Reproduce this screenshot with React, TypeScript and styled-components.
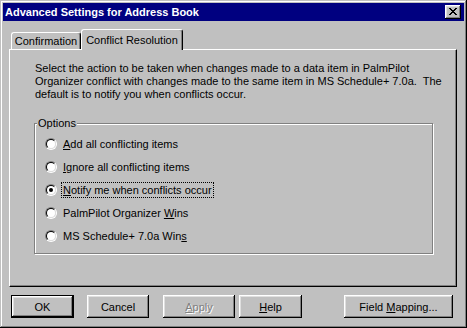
import React from 'react';
import styled, { createGlobalStyle, css } from 'styled-components';

const Colors = {
  face: '#c0c0c0',
  light: '#dfdfdf',
  white: '#ffffff',
  shadow: '#808080',
  dark: '#000000',
  navy: '#000080',
};

const GlobalStyle = createGlobalStyle`
  html, body {
    margin: 0;
    padding: 0;
    background: ${Colors.face};
  }
  * {
    box-sizing: border-box;
  }
`;

const Window = styled.div`
  width: 467px;
  height: 328px;
  padding: 3px;
  display: flex;
  flex-direction: column;
  background: ${Colors.face};
  font-family: 'Liberation Sans', Arial, sans-serif;
  font-size: 11px;
  color: ${Colors.dark};
  box-shadow: inset -1px -1px ${Colors.dark}, inset 1px 1px ${Colors.face},
    inset -2px -2px ${Colors.shadow}, inset 2px 2px ${Colors.white};
`;

const TitleBar = styled.div`
  height: 18px;
  background: ${Colors.navy};
  color: ${Colors.white};
  display: flex;
  align-items: center;
  justify-content: space-between;
  padding: 0 3px 0 2px;
  font-weight: bold;
  font-size: 11px;
`;

const CloseButton = styled.button`
  width: 16px;
  height: 14px;
  padding: 0;
  border: none;
  background: ${Colors.face};
  display: flex;
  align-items: center;
  justify-content: center;
  box-shadow: inset -1px -1px ${Colors.dark}, inset 1px 1px ${Colors.white},
    inset -2px -2px ${Colors.shadow}, inset 2px 2px ${Colors.light};
  svg {
    display: block;
    margin-top: -1px;
  }
`;

const Main = styled.div`
  flex: 1;
  display: flex;
  flex-direction: column;
  padding: 8px 7px 0 6px;
`;

const TabStrip = styled.div`
  display: flex;
  align-items: flex-end;
  height: 20px;
  padding-left: 2px;
  position: relative;
  z-index: 1;
`;

const Tab = styled.div<{ $active?: boolean; $w: number }>`
  width: ${({ $w }) => $w}px;
  height: 17px;
  display: flex;
  align-items: center;
  justify-content: center;
  background: ${Colors.face};
  border-top: 1px solid ${Colors.white};
  border-left: 1px solid ${Colors.white};
  border-right: 1px solid ${Colors.dark};
  border-radius: 3px 3px 0 0;
  box-shadow: inset -1px 0 ${Colors.shadow};
  white-space: nowrap;
  ${({ $active }) =>
    $active &&
    css`
      height: 21px;
      margin-bottom: -1px;
      padding-bottom: 1px;
    `}
`;

const Panel = styled.div`
  height: 238px;
  padding: 12px 24px 0 25px;
  border-top: 1px solid ${Colors.white};
  border-left: 1px solid ${Colors.white};
  border-right: 1px solid ${Colors.dark};
  border-bottom: 1px solid ${Colors.dark};
  box-shadow: inset -1px -1px ${Colors.shadow};
`;

const Description = styled.p`
  margin: 0;
  line-height: 13px;
  white-space: pre;
`;

const Group = styled.div`
  position: relative;
  margin: 22px -1px 0 -1px;
  height: 131px;
  padding: 8px 0 0 10px;
  border: 1px solid ${Colors.shadow};
  box-shadow: 1px 1px ${Colors.white}, inset 1px 1px ${Colors.white};
`;

const GroupLabel = styled.span`
  position: absolute;
  top: -8px;
  left: 2px;
  padding: 0 1px;
  line-height: 14px;
  background: ${Colors.face};
`;

const OptionRow = styled.label`
  height: 23px;
  display: flex;
  align-items: center;
  gap: 4px;
`;

const RadioOuter = styled.span`
  width: 12px;
  height: 12px;
  border-radius: 50%;
  border: 1px solid;
  border-color: ${Colors.shadow} ${Colors.white} ${Colors.white} ${Colors.shadow};
  display: flex;
`;

const RadioInner = styled.span`
  flex: 1;
  border-radius: 50%;
  border: 1px solid;
  border-color: ${Colors.dark} ${Colors.light} ${Colors.light} ${Colors.dark};
  background: ${Colors.white};
  display: flex;
  align-items: center;
  justify-content: center;
`;

const RadioDot = styled.span`
  width: 4px;
  height: 4px;
  border-radius: 50%;
  background: ${Colors.dark};
`;

const OptionText = styled.span<{ $focused?: boolean }>`
  line-height: 14px;
  padding: 0 1px;
  border: 1px dotted ${({ $focused }) => ($focused ? Colors.dark : 'transparent')};
  white-space: nowrap;
`;

const ButtonRow = styled.div`
  display: flex;
  margin-top: 8px;
  padding-left: 2px;
`;

const Button = styled.button<{ $w: number; $gap?: number; $default?: boolean }>`
  width: ${({ $w }) => $w}px;
  height: 23px;
  margin-left: ${({ $gap }) => $gap ?? 0}px;
  padding: 0;
  border: none;
  background: ${Colors.face};
  font-family: inherit;
  font-size: 11px;
  color: ${Colors.dark};
  box-shadow: inset -1px -1px ${Colors.dark}, inset 1px 1px ${Colors.white},
    inset -2px -2px ${Colors.shadow}, inset 2px 2px ${Colors.light};
  ${({ $default }) =>
    $default &&
    css`
      box-shadow: inset 0 0 0 1px ${Colors.dark}, inset -2px -2px ${Colors.dark},
        inset 2px 2px ${Colors.white}, inset -3px -3px ${Colors.shadow},
        inset 3px 3px ${Colors.light};
    `}
  &:disabled {
    color: ${Colors.shadow};
    text-shadow: 1px 1px ${Colors.white};
  }
`;

const Key = styled.u`
  text-underline-offset: 1px;
`;

const CloseGlyph = () => (
  <svg width="8" height="7" viewBox="0 0 8 7" shapeRendering="crispEdges">
    <path
      fill="#000"
      d="M0 0h2v1h-2zM6 0h2v1h-2zM1 1h2v1h-2zM5 1h2v1h-2zM2 2h4v1h-4zM3 3h2v1h-2zM2 4h4v1h-4zM1 5h2v1h-2zM5 5h2v1h-2zM0 6h2v1h-2zM6 6h2v1h-2z"
    />
  </svg>
);

interface RadioOptionProps {
  checked?: boolean;
  focused?: boolean;
  children: React.ReactNode;
}

const RadioOption: React.FC<RadioOptionProps> = ({ checked, focused, children }) => (
  <OptionRow>
    <RadioOuter>
      <RadioInner>{checked && <RadioDot />}</RadioInner>
    </RadioOuter>
    <OptionText $focused={focused}>{children}</OptionText>
  </OptionRow>
);

const App: React.FC = () => {
  return (
    <>
      <GlobalStyle />
      <Window>
        <TitleBar>
          <span>Advanced Settings for Address Book</span>
          <CloseButton aria-label="Close">
            <CloseGlyph />
          </CloseButton>
        </TitleBar>
        <Main>
          <TabStrip>
            <Tab $w={70}>Confirmation</Tab>
            <Tab $w={102} $active>
              Conflict Resolution
            </Tab>
          </TabStrip>
          <Panel>
            <Description>
              {'Select the action to be taken when changes made to a data item in PalmPilot\n'}
              {'Organizer conflict with changes made to the same item in MS Schedule+ 7.0a.  The\n'}
              {'default is to notify you when conflicts occur.'}
            </Description>
            <Group>
              <GroupLabel>Options</GroupLabel>
              <RadioOption>
                <Key>A</Key>dd all conflicting items
              </RadioOption>
              <RadioOption>
                <Key>I</Key>gnore all conflicting items
              </RadioOption>
              <RadioOption checked focused>
                <Key>N</Key>otify me when conflicts occur
              </RadioOption>
              <RadioOption>
                PalmPilot Organizer <Key>W</Key>ins
              </RadioOption>
              <RadioOption>
                MS Schedule+ 7.0a Win<Key>s</Key>
              </RadioOption>
            </Group>
          </Panel>
          <ButtonRow>
            <Button $w={63} $default>
              OK
            </Button>
            <Button $w={62} $gap={13}>
              Cancel
            </Button>
            <Button $w={72} $gap={14} disabled>
              <Key>A</Key>pply
            </Button>
            <Button $w={63} $gap={4}>
              <Key>H</Key>elp
            </Button>
            <Button $w={109} $gap={42}>
              Field <Key>M</Key>apping...
            </Button>
          </ButtonRow>
        </Main>
      </Window>
    </>
  );
};

export default App;
